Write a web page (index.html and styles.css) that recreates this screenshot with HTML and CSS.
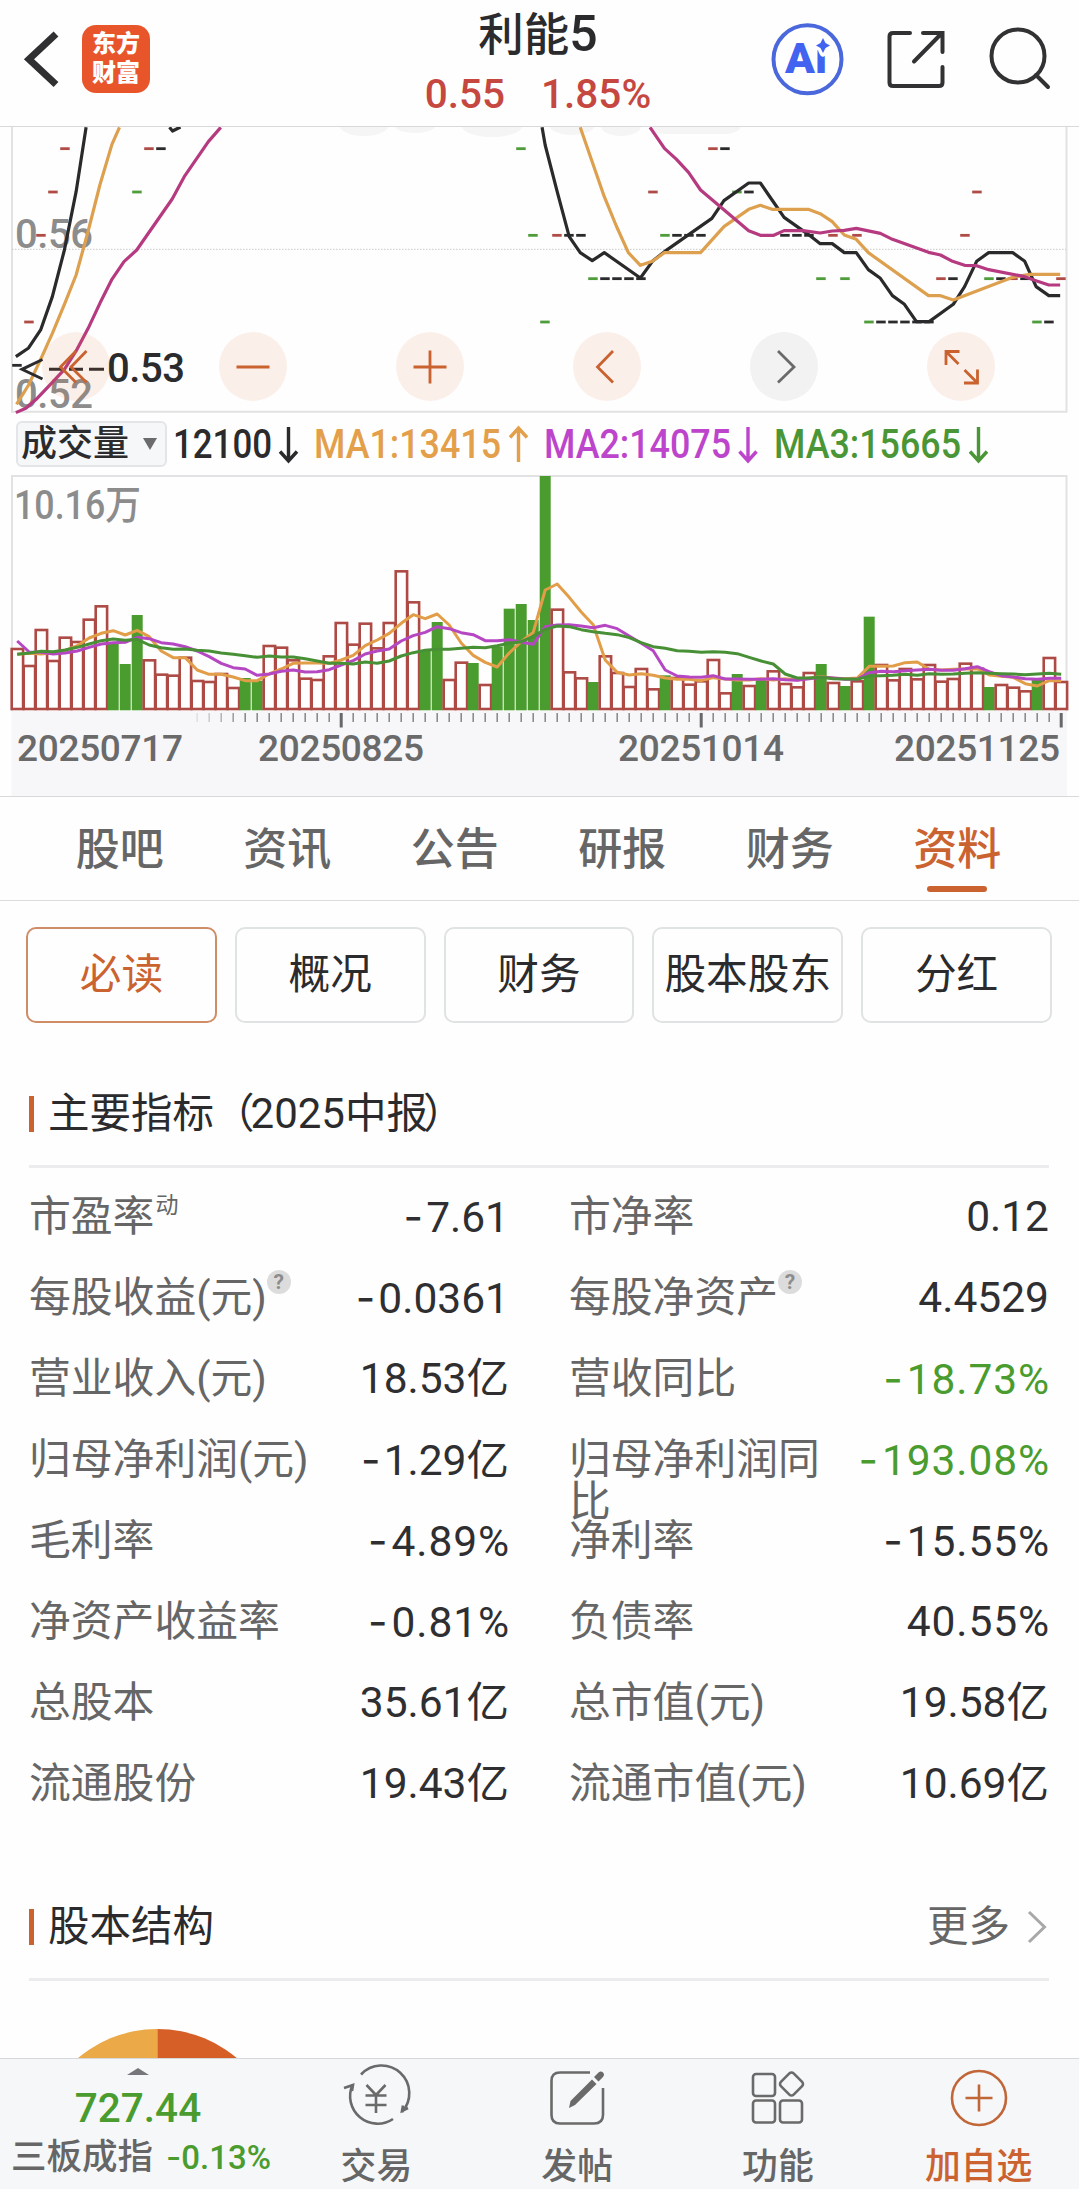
FILE: index.html
```html
<!DOCTYPE html>
<html lang="zh-CN">
  <head>
    <meta charset="utf-8" />
    <title>利能5</title>
    <link rel="stylesheet" href="styles.css">
  </head>
  <body>
    <header class="header">
      <div class="left">
        <svg class="back" width="40" height="60" viewBox="22 29 40 60"><path d="M56 34 29 59.3 56 84.500" /></svg>
        <div class="logo">东方<br>财富</div>
      </div>
      <div class="stock">
        <div class="name">利能<span class="num">5</span></div>
        <div class="quote num"><span>0.55</span><span>1.85%</span></div>
      </div>
      <svg class="actions" width="290" height="90" viewBox="760 15 290 90">
        <circle class="ai" cx="807.500" cy="59.300" r="34" />
        <text class="ai-text" x="785" y="73" textLength="42" lengthAdjust="spacingAndGlyphs">Ai</text>
        <path class="ai-star" d="M823 38 825.500 43 830 45.500 825.500 48 823 53 820.500 48 816 45.500 820.500 43Z" />
        <path d="M910 33H893Q889.500 33 889.500 36.500V82.500Q889.500 86 893 86H939Q942.500 86 942.500 82.500V67M923 33H942.500V52M942 33 914 61.500" />
        <circle cx="1018" cy="56" r="26.500" />
        <path d="M1036 75 1048 87" />
      </svg>
    </header>

    <section class="price">
      <svg width="1079" height="286" viewBox="0 127 1079 286">
        <g class="watermark">
          <ellipse cx="364" cy="126" rx="24" ry="10" /><ellipse cx="415" cy="126" rx="20" ry="7" />
          <ellipse cx="492" cy="126" rx="30" ry="11" /><ellipse cx="572" cy="126" rx="22" ry="9" />
          <ellipse cx="621" cy="126" rx="20" ry="10" /><path d="M650 127H741Q737 135 720 134H665Q653 134 650 127Z" />
        </g>
        <path class="frame" d="M12 127V411.700H1066.500V127" />
        <path class="grid" d="M12 249.300H1066" />
        <text class="scale" x="15" y="248" textLength="78">0.56</text>
        <text class="scale" x="15" y="408" textLength="78">0.52</text>
        <g id="marks"></g>
        <g class="lines" transform="translate(0 120) scale(.3444 .3333)">
          <polyline class="black" points="46,710 83,684 118,630 152,530 187,390 221,215 250,22" />
          <polyline class="black" points="492,22 501,33 524,21" />
          <polyline class="orange" points="48,853 83,795 118,718 152,640 187,553 221,465 256,333 290,195 325,73 347,22" />
          <polyline class="pink" points="46,878 75,865 105,838 152,787 187,748 221,693 256,625 290,550 325,478 360,425 397,390 500,237 535,170 605,65 641,22" />
        </g>
        <g class="lines" transform="translate(540 120) scale(.3438 .3333)">
          <polyline class="black" points="6,22 15,75 50,215 85,350 117,398 152,422 187,398 292,474 327,424 362,395 500,295 535,242 607,189 641,189 675,240 710,292 780,343 815,371 850,371 885,398 920,398 955,449 990,475 1025,527 1060,553 1095,605 1132,605 1202,553 1235,500 1270,424 1305,398 1375,398 1410,424 1443,500 1480,527 1513,527" />
          <polyline class="orange" points="117,22 150,120 187,230 222,318 257,398 292,436 327,424 362,398 467,398 535,320 607,268 641,256 675,268 780,268 815,281 850,305 885,345 920,358 955,398 1130,527 1165,527 1202,540 1375,472 1425,463 1513,463" />
          <polyline class="pink" points="320,22 362,85 397,118 432,157 467,210 607,332 641,346 680,346 710,332 765,332 815,339 850,333 885,331 920,325 990,340 1025,358 1130,397 1165,405 1200,424 1235,436 1270,437 1305,449 1410,470 1445,483 1480,495 1513,495" />
        </g>
        <path class="lowest" d="M42.500 359.500 22 369.300 42.500 379M49 369.300H62M69 369.300H83M89 369.300H104" />
        <text class="low" x="107" y="382" textLength="78">0.53</text>
      </svg>
      <div class="controls">
        <button><svg viewBox="0 0 68 68"><path d="M34 18 18.500 34 34 49.500M44.500 18 29 34 44.500 49.500" /></svg></button>
        <button><svg viewBox="0 0 68 68"><path d="M17.500 34H50.500" /></svg></button>
        <button><svg viewBox="0 0 68 68"><path d="M17.500 34H50.500M34 17.500V50.500" /></svg></button>
        <button><svg viewBox="0 0 68 68"><path d="M40 18 24.500 34 40 49.500" /></svg></button>
        <button class="off"><svg viewBox="0 0 68 68"><path d="M28 18 44 34 28 49.500" /></svg></button>
        <button><svg viewBox="0 0 68 68"><path d="M32.500 18.500H19V32M19 18.500 31.500 31M37 50H50.500V36.500M50.500 50 37.500 37" /></svg></button>
      </div>
    </section>

    <div class="legend">
      <div class="select">成交量<i></i></div>
      <svg width="900" height="54" viewBox="167 417 900 54">
        <text class="black" x="173" y="457.500" textLength="99" lengthAdjust="spacingAndGlyphs">12100</text>
        <path class="black" d="M288.500 427V461M280 451.500 288.500 461 297 451.500" />
        <text class="orange" x="314" y="457.500" textLength="187" lengthAdjust="spacingAndGlyphs">MA1:13415</text>
        <path class="orange" d="M518.500 462V428M510 437.500 518.500 428 527 437.500" />
        <text class="purple" x="544" y="457.500" textLength="187" lengthAdjust="spacingAndGlyphs">MA2:14075</text>
        <path class="purple" d="M748 427V461M739.500 451.500 748 461 756.500 451.500" />
        <text class="green" x="774" y="457.500" textLength="187" lengthAdjust="spacingAndGlyphs">MA3:15665</text>
        <path class="green" d="M978.500 427V461M970 451.500 978.500 461 987 451.500" />
      </svg>
    </div>

    <svg class="volume" width="1079" height="321" viewBox="0 475 1079 321">
      <rect class="axis" x="11.500" y="711" width="1055.500" height="85" />
      <path class="frame" d="M12 711V476H1066.500V711" />
      <text class="scale" x="14" y="518.500" textLength="127" lengthAdjust="spacingAndGlyphs">10.16万</text>
      <g id="bars"></g>
      <g id="averages"></g>
      <g id="ticks"></g>
      <g class="dates">
        <text x="17" y="760.500" textLength="166">20250717</text>
        <text x="258" y="760.500" textLength="166">20250825</text>
        <text x="618" y="760.500" textLength="166">20251014</text>
        <text x="894" y="760.500" textLength="166">20251125</text>
      </g>
    </svg>

    <nav class="tabs">
      <a>股吧</a><a>资讯</a><a>公告</a><a>研报</a><a>财务</a><a class="active">资料</a>
    </nav>

    <main>
      <div class="chips">
        <button class="active">必读</button>
        <button>概况</button>
        <button>财务</button>
        <button>股本股东</button>
        <button>分红</button>
      </div>

      <h2>主要指标<span class="paren">（</span><span class="num">2025</span>中报<span class="close">）</span></h2>
      <div class="table">
        <div class="row"><label>市盈率<sup>动</sup></label><b><i>-</i>7.61</b></div>
        <div class="row"><label>市净率</label><b>0.12</b></div>
        <div class="row"><label>每股收益(元)<em>?</em></label><b><i>-</i>0.0361</b></div>
        <div class="row"><label>每股净资产<em>?</em></label><b>4.4529</b></div>
        <div class="row"><label>营业收入(元)</label><b>18.53亿</b></div>
        <div class="row"><label>营收同比</label><b class="pct down"><i>-</i>18.73%</b></div>
        <div class="row"><label>归母净利润(元)</label><b><i>-</i>1.29亿</b></div>
        <div class="row"><label>归母净利润同比</label><b class="pct down"><i>-</i>193.08%</b></div>
        <div class="row"><label>毛利率</label><b class="pct"><i>-</i>4.89%</b></div>
        <div class="row"><label>净利率</label><b class="pct"><i>-</i>15.55%</b></div>
        <div class="row"><label>净资产收益率</label><b class="pct"><i>-</i>0.81%</b></div>
        <div class="row"><label>负债率</label><b class="pct">40.55%</b></div>
        <div class="row"><label>总股本</label><b>35.61亿</b></div>
        <div class="row"><label>总市值(元)</label><b>19.58亿</b></div>
        <div class="row"><label>流通股份</label><b>19.43亿</b></div>
        <div class="row"><label>流通市值(元)</label><b>10.69亿</b></div>
      </div>

      <h2>股本结构
        <span class="more">更多<svg width="20" height="34" viewBox="0 0 20 34"><path d="M2 2 17.500 17 2 32" /></svg></span>
      </h2>
      <svg class="pie" width="260" height="29" viewBox="0 0 260 29">
        <path fill="#eba948" d="M128.400 0A123 123 0 0 0 5.400 123H128.400Z" />
        <path fill="#d65f28" d="M128.400 0A123 123 0 0 1 251.400 123H128.400Z" />
      </svg>
    </main>

    <footer class="bottom">
      <div class="index">
        <span class="up"></span>
        <div class="value">727.44</div>
        <div class="change">三板成指<span><i>-</i>0.13%</span></div>
      </div>
      <a>
        <svg width="68" height="64" viewBox="0 0 68 64">
          <path d="M19 8.500A27.500 27.500 0 0 1 60 46M61 39.500 60 45 66 42M51 53A27.500 27.500 0 0 1 10.500 19M2 22 11 19 10 25" />
          <path d="M24.500 19 34 29 43.500 19M34 29V47M23.500 29.500H44.500M23.500 39H44.500" />
        </svg>
        交易
      </a>
      <a>
        <svg width="68" height="64" viewBox="0 0 68 64">
          <path d="M47 6.500H17Q8.500 6.500 8.500 15V49Q8.500 57.500 17 57.500H51Q60 57.500 60 49V22" />
          <path class="solid" d="M26 42 27.500 35 49 13.500 53.500 18 32 39ZM51 11 55.500 6.500Q58 4.500 60 6.500 62 8.500 60 11L55.500 15.500Z" />
        </svg>
        发帖
      </a>
      <a>
        <svg width="68" height="64" viewBox="0 0 68 64">
          <rect x="9" y="8" width="22" height="22" rx="3" />
          <rect x="9" y="34.500" width="22" height="22" rx="3" />
          <rect x="36" y="34.500" width="22" height="22" rx="3" />
          <rect x="38.500" y="9" width="18" height="18" rx="3" transform="rotate(45 47.500 18)" />
        </svg>
        功能
      </a>
      <a class="add">
        <svg width="68" height="64" viewBox="0 0 68 64">
          <circle cx="34" cy="32" r="27" />
          <path d="M20.500 32H47.500M34 18.500V45.500" />
        </svg>
        加自选
      </a>
    </footer>

    <script src="chart.js"></script>
  </body>
</html>
```

FILE: chart.js
```js
// 88 trading days, 12px per day; all y values below are in thirds of a pixel
const x = i => 17.2 + 12 * i;
const byId = id => document.getElementById(id);

// volume bar tops, "g" marks a falling day
const bars = `537 588 480 573 503 516 449 409 g520 g582 g435 571 614 617 563 633 636 612 654 g624 g632 528
533 571 626 630 559 459 524 461 535 459 304 397 g540 g456 630 578 g579 645 g530 g416 g402 g450
g18 419 607 625 g636 559 609 651 597 658 g616 624 644 634 570 670 g612 648 g628 604 642 652
609 g582 639 g648 634 g440 585 631 597 628 585 635 627 581 596 g651 645 653 664 g630 564 636`.split(/\s+/);

byId("bars").innerHTML = bars.map((bar, i) => {
  const green = bar[0] === "g";
  const top = 470 + Number(bar.replace("g", "")) / 3;
  return green
    ? `<rect class="fall" x="${x(i) - 5.5}" y="${top}" width="11" height="${710.3 - top}" />`
    : `<rect class="rise" x="${x(i) - 5.5}" y="${top}" width="11.400" height="${709 - top}" />`;
}).join("");

const averages = {
  orange: [553,550,552,548,541,527,504,490,482,495,481,500,543,563,563,600,613,613,621,632,632,612,
    597,580,579,579,580,570,556,527,510,490,460,434,446,432,465,519,556,577,591,549,515,487,
    360,342,382,426,464,570,607,615,611,616,624,628,628,632,623,627,630,630,626,630,626,630,
    624,620,624,626,624,589,589,588,578,576,598,600,598,597,596,615,619,622,641,648,632,632],
  purple: [513,546,547,552,549,543,532,522,518,517,502,506,518,522,530,543,560,580,593,597,616,612,
    604,600,606,605,599,585,572,552,543,537,513,497,487,470,476,488,494,512,512,509,516,523,
    470,465,464,468,473,466,476,498,520,542,600,618,621,622,617,627,627,628,628,626,629,631,
    626,622,624,628,628,608,604,605,602,600,598,601,601,596,590,605,617,621,626,628,625,625],
  green: [553,549,544,545,540,532,522,512,507,511,508,525,533,538,537,541,543,549,553,557,562,558,
    561,561,566,573,580,580,582,576,580,573,558,548,541,538,538,535,532,533,527,520,515,500,
    478,468,470,479,485,490,494,503,518,530,535,542,544,547,545,547,551,562,573,582,612,624,
    624,622,626,627,628,618,617,616,613,616,611,613,612,610,608,610,611,612,614,612,610,613]
};

byId("averages").innerHTML = Object.entries(averages).map(([name, values]) =>
  `<polyline class="${name}" points="${values.map((v, i) => `${x(i)},${470 + v / 3}`).join(" ")}" />`
).join("");

let ticks = "";
for (let i = 15; i < 88; i++) {
  const major = i % 30 === 27;
  const opacity = Math.min(1, (i - 14) / 5);
  ticks += `<path class="${major ? "major" : ""}" opacity="${opacity}" d="M${x(i)} 713V${major ? 727.5 : 722}" />`;
}
byId("ticks").innerHTML = ticks;

// closing price marks: level -> day numbers
const marks = {
  red: { 86: [4, 11, 58], 216: [3, 53, 80], 346: [2, 45, 68, 70, 79], 476: [77, 83, 87], 606: [1] },
  black: { 86: [12, 59], 216: [61], 346: [46, 47, 55, 56, 57, 64, 65, 66],
    476: [49, 50, 51, 52, 78, 82, 84], 606: [72, 73, 74, 75, 76, 86], 736: [0] },
  green: { 86: [42], 216: [10, 60], 346: [43, 54], 476: [48, 67, 69, 81], 606: [44, 71, 85] }
};

let dashes = "";
for (const color in marks) {
  for (const level in marks[color]) {
    for (const i of marks[color][level]) {
      dashes += `<path class="${color}" d="M${x(i) - 5} ${120 + level / 3}h9.500" />`;
    }
  }
}
byId("marks").innerHTML = dashes;
```

FILE: styles.css
```css
* {
  box-sizing: border-box;
}

body {
  margin: 0;
  width: 1079px;
  height: 2189px;
  overflow: hidden;
  display: flex;
  flex-direction: column;
  background-color: #fefefe;
  color: #2b2b2d;
  font-family: Roboto, "Noto Sans CJK SC", sans-serif;
}

svg {
  display: block;
  fill: none;
  overflow: visible;
}

button {
  font-family: inherit;
  padding: 0;
}

i {
  font-style: normal;
}

/* header */
.header {
  height: 127px;
  flex: none;
  display: flex;
  justify-content: space-between;
  padding: 0 29px 0 22px;
  border-bottom: 1px solid #d9d9db;
}
.left {
  width: 290px;
  height: 118px;
  display: flex;
  align-items: center;
  gap: 20px;
}
.back {
  stroke: #303032;
  stroke-width: 7;
}
.logo {
  width: 68px;
  height: 68px;
  border-radius: 14px;
  padding-top: 5px;
  background-color: #e9552b;
  color: #fff;
  font-size: 24px;
  font-weight: 900;
  line-height: 29px;
  text-align: center;
}
.stock {
  padding-left: 4px;
  text-align: center;
}
.name {
  font-size: 45.5px;
  font-weight: 500;
  line-height: 69px;
}
.name .num {
  font-size: 50px;
}
.quote {
  display: flex;
  gap: 36px;
  margin-top: -1px;
  color: #c5473f;
  font-size: 40.5px;
  font-weight: 500;
  line-height: 50px;
}
.actions {
  margin-top: 15px;
  stroke: #323234;
  stroke-width: 4;
  stroke-linecap: round;
}
.ai {
  stroke: #4a68dc;
}
.ai-text, .ai-star {
  stroke: none;
  fill: #4263f0;
}
.ai-text {
  font-size: 42px;
  font-weight: 900;
}
.ai-star {
  stroke: #fefefe;
  stroke-width: 7;
  stroke-linejoin: round;
  paint-order: stroke;
}

/* price chart */
.price {
  position: relative;
  flex: none;
}
.price > svg {
  clip-path: inset(0 0 -10px 0);
}
.watermark {
  fill: #f5f5f6;
}
.frame {
  stroke: #e2e2e4;
  stroke-width: 2;
}
.grid {
  stroke: #c8c8ca;
  stroke-dasharray: 1.5 1.5;
}
.scale {
  fill: #8c8c8c;
  font-size: 40px;
  font-weight: 500;
}
.low {
  fill: #2b2b2d;
  font-size: 40px;
  font-weight: 500;
}
.lowest {
  stroke: #2b2b2d;
  stroke-width: 3;
}
#marks path {
  stroke-width: 2.8;
}
#marks .red { stroke: #b04c46; }
#marks .black { stroke: #2b2b2d; }
#marks .green { stroke: #4f9c3b; }
.lines polyline {
  stroke-width: 3.2;
  stroke-linejoin: round;
  vector-effect: non-scaling-stroke;
}
.lines .black { stroke: #2a2a2c; }
.lines .orange { stroke: #dda04f; }
.lines .pink { stroke: #b63a80; }

.controls {
  position: absolute;
  left: 42px;
  top: 205px;
  display: flex;
  gap: 109px;
}
.controls button {
  width: 68px;
  height: 69px;
  border: 0;
  border-radius: 50%;
  background-color: rgba(222, 110, 50, 0.1);
}
.controls path {
  stroke: #c9622f;
  stroke-width: 2.8;
}
.controls .off {
  background-color: #f2f2f3;
}
.controls .off path {
  stroke: #6a6a6c;
}

/* volume */
.legend {
  height: 62px;
  flex: none;
  display: flex;
  align-items: center;
  padding-left: 16px;
}
.select {
  width: 151px;
  height: 46px;
  display: flex;
  align-items: center;
  justify-content: space-between;
  padding: 0 8px 0 3px;
  border: 2px solid #e3e5e8;
  border-radius: 6px;
  background-color: #f5f7f9;
  font-size: 36px;
  font-weight: 500;
  line-height: 42px;
}
.select i {
  border: 7px solid transparent;
  border-top: 12px solid #6b6b6d;
  border-bottom: 0;
}
.legend text {
  font-size: 40px;
  font-weight: 500;
}
.legend path {
  stroke-width: 3.4;
}
.legend text.black { fill: #2b2b2d; }
.legend text.orange { fill: #e39f4a; }
.legend text.purple { fill: #bd45cb; }
.legend text.green { fill: #4a9636; }
.legend path.black { stroke: #2b2b2d; }
.legend path.orange { stroke: #e39f4a; }
.legend path.purple { stroke: #bd45cb; }
.legend path.green { stroke: #4a9636; }

.volume {
  flex: none;
}
.axis {
  fill: #f7f7fa;
}
.fall {
  fill: #4a9c2e;
}
.rise {
  fill: #fefefe;
  stroke: #ae4a45;
  stroke-width: 2.6;
}
#averages polyline {
  stroke-width: 3;
  stroke-linejoin: round;
}
#averages .orange { stroke: #e29d48; }
#averages .purple { stroke: #b647c3; }
#averages .green { stroke: #489036; }
#ticks path {
  stroke: #858587;
  stroke-width: 1.5;
}
#ticks .major {
  stroke: #68686a;
  stroke-width: 3;
}
.dates text {
  fill: #6a6a6a;
  font-size: 37px;
  font-weight: 500;
}

/* tabs */
.tabs {
  height: 105px;
  flex: none;
  display: flex;
  padding: 0 38px 0 36px;
  border-top: 1px solid #d9d9db;
  border-bottom: 1px solid #dcdcde;
}
.tabs a {
  flex: 1 1 0;
  display: flex;
  flex-direction: column;
  align-items: center;
  color: #666;
  font-size: 44px;
  font-weight: 500;
  line-height: 107px;
}
.tabs .active {
  color: #cb6330;
}
.tabs .active::after {
  content: "";
  width: 60px;
  height: 6px;
  margin-top: -18px;
  border-radius: 3px;
  background-color: #cb6330;
}

main {
  flex: 1 1 0;
  overflow: hidden;
  padding: 26px 30px 0 29px;
}
.chips {
  display: flex;
  gap: 18px;
  margin: 0 -3px;
}
.chips button {
  flex: 1 1 0;
  height: 96px;
  padding-bottom: 9px;
  border: 2px solid #e0e3e4;
  border-radius: 10px;
  background-color: #fefefe;
  color: #2b2b2d;
  font-size: 41.7px;
  white-space: nowrap;
}
.chips .active {
  border-color: #cf8d67;
  color: #cb6330;
}

h2 {
  height: 94px;
  margin: 51px 0 0;
  display: flex;
  align-items: center;
  border-bottom: 3px solid #ececee;
  font-size: 41.5px;
  font-weight: 400;
  line-height: 60px;
  padding-bottom: 12px;
}
h2::before {
  content: "";
  width: 5px;
  height: 36px;
  margin: 0 14px 0 0;
  background-color: #cb6330;
}
h2 .paren {
  margin-left: -1px;
  margin-right: -4px;
}
h2 .close {
  margin-left: -5px;
}
h2 .num {
  font-size: 42px;
}
.more {
  display: flex;
  align-items: center;
  gap: 17px;
  margin-left: auto;
  padding-right: 2px;
  color: #666;
}
.more path {
  stroke: #a8a8aa;
  stroke-width: 3;
}

/* indicators */
.table {
  display: grid;
  grid-template-columns: 1fr 1fr;
  grid-auto-rows: 81px;
  column-gap: 60px;
  padding-top: 28px;
}
.row {
  display: flex;
  justify-content: space-between;
  font-size: 41.8px;
  line-height: 42px;
}
.row label {
  max-width: 282px;
  color: #666;
}
.row b {
  color: #2f2f31;
  font-size: 42.5px;
  font-weight: 400;
}
.row i, .index i {
  font-family: Inter, sans-serif;
}
.row i {
  margin-right: 3px;
}
.row .pct {
  letter-spacing: 0.9px;
  margin-right: -1px;
}
.row .down {
  color: #4a9c2e;
}
sup {
  display: inline-block;
  margin-left: 1px;
  font-size: 23px;
  line-height: 12px;
  vertical-align: 18px;
}
.row em {
  position: relative;
  top: -23px;
  display: inline-block;
  width: 24px;
  height: 24px;
  border-radius: 50%;
  background-color: #dcdcdc;
  color: #8c8c8c;
  font-size: 21px;
  font-style: normal;
  font-weight: 700;
  line-height: 24px;
  text-align: center;
}

.table + h2 {
  margin-top: 43px;
}
.pie {
  margin-top: 48px;
}

/* bottom bar */
.bottom {
  height: 131px;
  flex: none;
  display: flex;
  border-top: 1px solid #d5d7da;
  background-color: #f6f7f9;
}
.index {
  width: 276px;
  display: flex;
  flex-direction: column;
  align-items: center;
  color: #4a9c2e;
}
.up {
  margin: 9px 0 9px;
  border: 11px solid transparent;
  border-bottom: 7px solid #77777b;
  border-top: 0;
}
.value {
  font-size: 40.5px;
  font-weight: 500;
  line-height: 48px;
}
.change {
  display: flex;
  gap: 13px;
  align-items: baseline;
  padding-left: 6px;
  color: #666;
  font-size: 35.5px;
  font-weight: 500;
  line-height: 51px;
}
.change span {
  color: #4a9c2e;
  font-size: 33px;
  font-weight: 500;
}
.bottom a {
  flex: 1 1 0;
  display: flex;
  flex-direction: column;
  align-items: center;
  padding-top: 7px;
  color: #666;
  font-size: 35.8px;
  font-weight: 500;
  line-height: 64px;
}
.bottom svg {
  flex: none;
  margin-bottom: 5px;
  stroke: #6a6a6a;
  stroke-width: 2.6;
}
.bottom .solid {
  fill: #6a6a6a;
  stroke: none;
}
.bottom .add {
  color: #cb6330;
}
.bottom .add svg {
  stroke: #c06637;
}
```
